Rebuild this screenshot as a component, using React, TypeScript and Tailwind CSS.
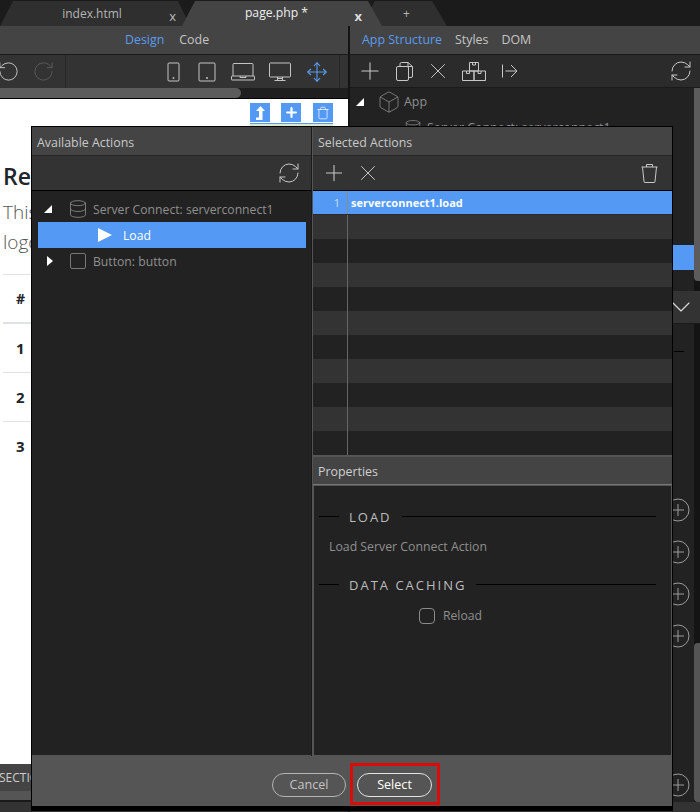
import React from "react";
import { Plus, X, RefreshCw, Box, Database, Trash, RotateCcw, RotateCw, Move, ChevronDown } from "lucide-react";

function Tab({ label, close, active, className }: { label: string; close?: boolean; active?: boolean; className: string }) {
  return (
    <div className={className}>
      <span className={active ? "text-[#eeeeee] text-[12.2px]" : "text-[#b4b4b4] text-[12px]"}>{label}</span>
      {close && <span className={active ? "absolute right-[20px] top-[6px] text-[13px] font-bold text-[#dddddd]" : "absolute right-[14px] top-[6px] text-[13px] text-[#bbbbbb]"}>x</span>}
    </div>
  );
}

function Device({ d }: { d: React.ReactNode }) {
  return <svg width="28" height="24" viewBox="0 0 28 24" fill="none" stroke="#c4c4c4" strokeWidth="1">{d}</svg>;
}

function Boxes() {
  return (
    <svg width="24" height="19" viewBox="0 0 24 19" fill="none" stroke="#c8c8c8" strokeWidth="1">
      <path d="M7.500.5h9V9h-9zM.5 9H12v9.500H.5zM12 9h11.500v9.500H12zM10.500.5v2.500h3V.5M4.500 9v2.500h3V9M16 9v2.500h3V9" />
    </svg>
  );
}

function CopyIcon() {
  return (
    <svg width="17" height="19" viewBox="0 0 17 19" fill="none" stroke="#c8c8c8" strokeWidth="1">
      <rect x=".5" y="4.500" width="12" height="14" rx="1.500" />
      <path d="M4 4.500V2a1.500 1.500 0 0 1 1.500-1.500H12l4.500 4V14a1.500 1.500 0 0 1-1.500 1.500h-2.500M12 .5v4h4.500" />
    </svg>
  );
}

function ArrowFromBar() {
  return (
    <svg width="16" height="14" viewBox="0 0 16 14" fill="none" stroke="#c8c8c8" strokeWidth="1">
      <path d="M.5.500v13M3.500 7h11.500M9 1l6 6-6 6" />
    </svg>
  );
}

function BucketIcon() {
  return (
    <svg width="17" height="19" viewBox="0 0 17 19" fill="none" stroke="#c8c8c8" strokeWidth="1">
      <path d="M.5 3h16M5.500 3V.500h6V3M1.500 3l1.500 14.500a1 1 0 0 0 1 1h9a1 1 0 0 0 1-1L15.500 3" />
    </svg>
  );
}

function SectionTitle({ label }: { label: string }) {
  return (
    <div className="flex items-center h-[20px]">
      <div className="w-[20px] h-px bg-black" />
      <span className="mx-[10px] pt-[3px] text-[13px] tracking-[2px] text-[#bdbdbd]">{label}</span>
      <div className="flex-1 h-px bg-black" />
    </div>
  );
}

function PlusCircle() {
  return (
    <svg width="24" height="24" viewBox="0 0 24 24" fill="none" stroke="#9b9b9b" strokeWidth="1">
      <circle cx="12" cy="12" r="11" />
      <path d="M6 12h12M12 6v12" />
    </svg>
  );
}

export default function App() {
  const rows = [0, 1, 2, 3, 4, 5, 6, 7, 8, 9];
  return (
    <div className="relative w-[700px] h-[812px] overflow-hidden bg-[#1c1c1c] font-['Open_Sans',sans-serif]">
      {/* tabs */}
      <div className="relative h-[26px] bg-[#1b1b1b]">
        <Tab label="index.html" close className="absolute left-0 top-px w-[190px] h-[25px] bg-[#2f2f2f] pr-[6px] flex items-center justify-center [clip-path:polygon(0_100%,13px_0,178px_0,190px_100%)]" />
        <Tab label="+" className="absolute left-[360px] top-px w-[87px] h-[25px] bg-[#2f2f2f] flex items-center justify-center pl-[6px] [clip-path:polygon(0_100%,15px_0,72px_0,87px_100%)]" />
        <Tab label="page.php *" close active className="absolute left-[182px] top-px w-[200px] h-[25px] bg-[#444444] flex items-center justify-center pr-[11px] [clip-path:polygon(0_100%,13px_0,186px_0,200px_100%)]" />
      </div>

      <div className="flex h-[786px]">
        {/* left column */}
        <div className="w-[348px] flex flex-col">
          <div className="h-[28px] bg-[#444444] border-b border-[#1a1a1a] flex items-center justify-start pl-[125px] gap-[15px] text-[12.4px] box-content">
            <span className="text-[#5b9bf0]">Design</span>
            <span className="text-[#c4c4c4]">Code</span>
          </div>
          <div className="h-[33px] bg-[#333333] flex items-center">
            <div className="w-[66px] h-full border-r border-[#262626] flex items-center overflow-hidden">
              <RotateCcw size={23} strokeWidth={1} color="#c8c8c8" className="ml-[-3px] shrink-0" />
              <RotateCw size={23} strokeWidth={1} color="#5a5a5a" className="ml-[12px] shrink-0" />
            </div>
            <div className="flex items-center ml-[93px]">
              <Device d={<><rect x="9" y="3" width="11" height="18" rx="1" /><circle cx="14.500" cy="18" r=".6" fill="#c4c4c4" /></>} />
              <div className="ml-[6px]"><Device d={<><rect x="6" y="3" width="16" height="18" rx="1" /><circle cx="14" cy="18" r=".6" fill="#c4c4c4" /></>} /></div>
              <div className="ml-[8px]"><Device d={<><path d="M4 16V4.500a1 1 0 0 1 1-1h18a1 1 0 0 1 1 1V16" /><rect x="2.500" y="16" width="23" height="4" rx=".5" /><path d="M11 16v1.500h6V16" /></>} /></div>
              <div className="ml-[9px]"><Device d={<><rect x="3.500" y="3" width="21" height="14" rx="1" /><path d="M11.500 17v3M16.500 17v3M8.500 20.500h11M11.500 18.500h5" /></>} /></div>
              <Move size={22} strokeWidth={1.200} color="#5b9bf0" className="ml-[12px]" />
            </div>
            <div className="ml-auto mr-[8px] h-full border-l border-[#262626]" />
          </div>
          <div className="h-[10px] bg-[#1f1f1f] border-b border-black box-content">
            <div className="w-[241px] h-full bg-[#5c5c5c] rounded-r-[5px]" />
          </div>
          <div className="relative flex-1 bg-white text-[#212529] pl-[3px]">
            <div className="absolute left-[250px] top-[4px] flex gap-[11px]">
              <div className="w-[20px] h-[19px] bg-[#5499f4] flex items-center justify-center">
                <svg width="12" height="14" viewBox="0 0 12 14" fill="white"><path d="M6.500 0L11 5H8.500V14H2V11.500H5V5H2z" /></svg>
              </div>
              <div className="w-[20px] h-[19px] bg-[#5499f4] flex items-center justify-center ml-0">
                <Plus size={15} strokeWidth={3.500} color="white" />
              </div>
              <div className="w-[20px] h-[19px] bg-[#5499f4] flex items-center justify-center ml-px">
                <Trash size={14} strokeWidth={1.200} color="white" />
              </div>
            </div>
            <div className="absolute left-[250px] top-[24px] w-[83px] h-[3px] bg-[#dbe8d0] border-t border-[#5499f4]" />
            <div className="pt-[63px] text-[23px] font-semibold leading-[28px]">Re</div>
            <div className="mt-[7px] text-[19px] font-light leading-[30px] text-[#555555]">This</div>
            <div className="text-[19px] font-light leading-[30px] text-[#555555]">logo</div>
            <div className="mt-[17px] h-[48px] border-t border-[#dee2e6] text-[14px] font-bold flex items-center pl-[13px]">#</div>
            <div className="h-[50px] border-t-2 border-[#dee2e6] text-[15px] font-bold flex items-center pl-[13px]">1</div>
            <div className="h-[49px] border-t border-[#dee2e6] text-[15px] font-bold flex items-center pl-[13px]">2</div>
            <div className="h-[49px] border-t border-[#dee2e6] text-[15px] font-bold flex items-center pl-[13px]">3</div>
            <div className="absolute left-0 bottom-[12px] right-0 h-[36px] flex flex-col">
              <div className="h-[27px] bg-[#444444] text-[#cccccc] text-[12px] flex items-center -ml-[1px]">SECTION</div>
              <div className="h-[9px] bg-[#555555]" />
            </div>
            <div className="absolute left-0 bottom-0 right-0 h-[12px] bg-[#333333] border-t-2 border-[#1a1a1a]" />
          </div>
        </div>

        <div className="w-[2px] bg-[#141414]" />

        {/* right column */}
        <div className="flex-1 flex flex-col bg-[#222222]">
          <div className="h-[28px] bg-[#444444] border-b border-[#1a1a1a] box-content flex items-center text-[12.4px] pl-[12px]">
            <span className="text-[#5b9bf0]">App Structure</span>
            <span className="ml-[13px] text-[#c4c4c4]">Styles</span>
            <span className="ml-[13px] text-[#c4c4c4]">DOM</span>
          </div>
          <div className="h-[33px] bg-[#2b2b2b] flex items-center border-b border-[#1a1a1a]">
            <Plus size={28} strokeWidth={0.900} color="#c8c8c8" className="ml-[6px] shrink-0" />
            <div className="ml-[12px]"><CopyIcon /></div>
            <X size={26} strokeWidth={0.900} color="#c8c8c8" className="ml-[12px] shrink-0" />
            <div className="ml-[11px]"><Boxes /></div>
            <div className="ml-[16px]"><ArrowFromBar /></div>
            <RefreshCw size={24} strokeWidth={1} color="#c8c8c8" className="ml-auto mr-[7px]" />
          </div>
          <div className="relative flex-1 overflow-hidden">
            <div className="flex items-center h-[26px] mt-[1px]">
              <div className="ml-[6px] w-0 h-0 border-b-[8px] border-l-[8px] border-b-white border-l-transparent" />
              <Box size={24} strokeWidth={0.800} color="#8a8a8a" className="ml-[13px]" />
              <span className="ml-[3px] pt-px text-[12.4px] text-[#8f8f8f]">App</span>
            </div>
            <div className="flex items-center h-[26px] ml-[54px]">
              <Database size={18} strokeWidth={1} color="#8a8a8a" />
              <span className="ml-[5px] text-[12.4px] text-[#8f8f8f]">Server Connect: serverconnect1</span>
            </div>
            <div className="absolute left-[323px] top-[157px] w-[21px] h-[25px] bg-[#5499f4]" />
            <div className="absolute right-0 top-0 bottom-0 w-[6px] bg-[#141414]" />
            <div className="absolute right-0 top-0 w-[6px] h-[193px] bg-[#5c5c5c] rounded-bl-[4px]" />
            <div className="absolute right-0 top-[555px] w-[6px] h-[159px] bg-[#555555] rounded-l-[4px]" />
            <div className="absolute left-0 right-0 top-[203px] h-[33px] bg-[#333333] border-b border-[#1a1a1a] flex items-center justify-end pr-[3px]">
              <ChevronDown size={32} strokeWidth={0.800} color="#dddddd" />
            </div>
            <div className="absolute left-[324px] top-[263px] w-[10px] h-px bg-black" />
            <div className="absolute left-[316px] top-[410px] flex flex-col gap-[18px]">
              <PlusCircle /><PlusCircle /><PlusCircle /><PlusCircle />
            </div>
            <div className="absolute left-[316px] top-[685px]"><PlusCircle /></div>
            <div className="absolute left-0 right-0 bottom-0 h-[10px] bg-[#333333]" />
          </div>
        </div>
      </div>

      {/* dialog */}
      <div className="absolute left-[31px] top-[126px] w-[642px] h-[685px] bg-[#555555] border-t border-l border-r border-black border-b-[5px] flex flex-col">
        <div className="flex h-[629px]">
          <div className="w-[279px] flex flex-col">
            <div className="h-[29px] bg-[#444444] border-b border-[#262626] flex items-center pl-[5px] pt-[4px] text-[12.4px] text-[#c8c8c8]">Available Actions</div>
            <div className="h-[35px] bg-[#333333] border-b border-black flex items-center justify-end pr-[10px]">
              <RefreshCw size={24} strokeWidth={1} color="#c8c8c8" />
            </div>
            <div className="flex-1 bg-[#222222] pt-[5px] pl-[6px] pr-[5px] border-b border-[#555555]">
              <div className="flex items-center h-[26px] text-[12.2px] text-[#8f8f8f]">
                <div className="ml-[6px] w-0 h-0 border-b-[8px] border-l-[8px] border-b-white border-l-transparent" />
                <Database size={20} strokeWidth={1} color="#8a8a8a" className="ml-[16px]" />
                <span className="ml-[5px] pt-[2px]">Server Connect: serverconnect1</span>
              </div>
              <div className="h-[26px] bg-[#5499f4] flex items-center text-[12.2px] text-white">
                <div className="ml-[60px] w-0 h-0 border-y-[7px] border-y-transparent border-l-[14px] border-l-white" />
                <span className="ml-[11px] pt-[2px]">Load</span>
              </div>
              <div className="flex items-center h-[26px] text-[12.2px] text-[#8f8f8f]">
                <div className="ml-[9px] w-0 h-0 border-y-[5px] border-y-transparent border-l-[6px] border-l-white" />
                <div className="ml-[17px] w-[16px] h-[16px] border border-[#777777] rounded-[2px]" />
                <span className="ml-[7px] pt-[2px]">Button: button</span>
              </div>
            </div>
          </div>

          <div className="w-[1px] bg-[#1a1a1a]" />
          <div className="w-[1px] bg-[#555555]" />

          <div className="flex-1 flex flex-col min-w-0">
            <div className="h-[29px] bg-[#444444] border-b border-[#262626] flex items-center pl-[5px] pt-[4px] text-[12.4px] text-[#c8c8c8]">Selected Actions</div>
            <div className="h-[35px] bg-[#333333] border-b border-black flex items-center pl-[8px]">
              <Plus size={26} strokeWidth={1} color="#c8c8c8" className="shrink-0" />
              <X size={26} strokeWidth={0.900} color="#c8c8c8" className="ml-[8px] shrink-0" />
              <div className="ml-auto mr-[14px]"><BucketIcon /></div>
            </div>
            <div className="h-[24px] bg-[#5499f4] flex items-center border-b border-[#2a2a2a]">
              <div className="w-[35px] h-full border-r border-[#8a8a8a] text-[11px] text-[#cfe0f7] flex items-center justify-end pr-[7px] pt-px">1</div>
              <span className="ml-[3px] pt-[2px] text-[11px] font-bold text-white">serverconnect1.load</span>
            </div>
            <div className="h-[241px] flex flex-col">
              {rows.map((r) => (
                <div key={r} className={r % 2 === 0 ? "h-[24px] bg-[#333333] shrink-0" : "h-[24px] bg-[#222222] shrink-0"}>
                  <div className="w-[35px] h-full border-r border-[#666666]" />
                </div>
              ))}
            </div>
            <div className="h-[29px] bg-[#444444] border-t border-[#555555] border-b border-b-[#777777] flex items-center pl-[5px] pt-[3px] text-[12.4px] text-[#cfcfcf]">Properties</div>
            <div className="flex-1 bg-[#222222] border border-[#555555] pt-[20px] pl-[5px] pr-[15px]">
              <SectionTitle label="LOAD" />
              <div className="mt-[10px] ml-[10px] pt-[2px] text-[12.3px] text-[#8f8f8f] h-[20px] flex items-center">Load Server Connect Action</div>
              <div className="mt-[18px]"><SectionTitle label="DATA CACHING" /></div>
              <div className="mt-[12px] ml-[100px] flex items-center h-[20px] gap-[8px] text-[12.2px] text-[#8f8f8f]">
                <div className="w-[16px] h-[16px] border border-[#8a8a8a] rounded-[4px]" />
                <span className="pt-px">Reload</span>
              </div>
            </div>
          </div>
        </div>
        <div className="relative flex-1 bg-[#555555] flex items-start justify-center gap-[11px] pt-[17px]">
          <div className="w-[74px] h-[24px] rounded-full border border-[#b4b4b4] text-[12.6px] text-[#c4c4c4] flex items-center justify-center">Cancel</div>
          <div className="w-[75px] h-[24px] rounded-full border border-[#e4e4e4] text-[12.6px] text-white flex items-center justify-center">Select</div>
          <div className="absolute left-[318px] top-[7px] w-[90px] h-[42px] border-[3px] border-[#dd0a0a]" />
        </div>
      </div>
    </div>
  );
}
